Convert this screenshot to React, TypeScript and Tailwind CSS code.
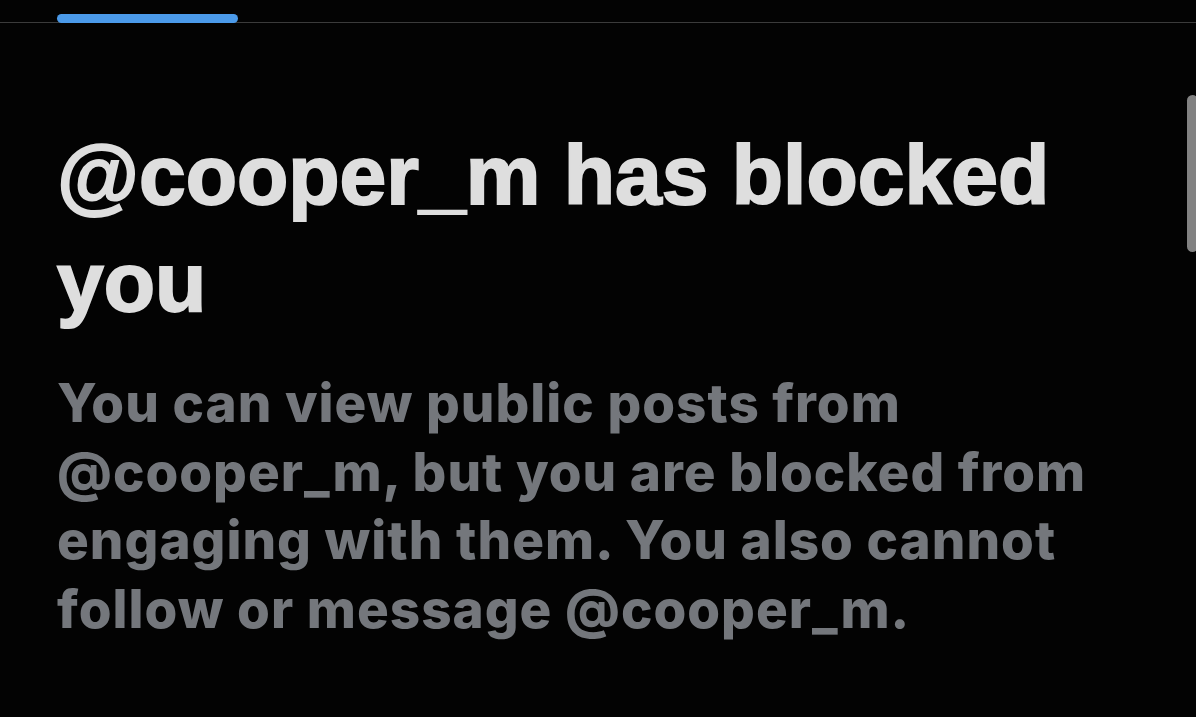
import React from "react";

// Blocked-profile notice, dark theme
function TabStrip() {
  return (
    <div className="relative h-[23px] border-b border-[#3b3b3b]">
      <div className="absolute left-[57px] bottom-[-1px] h-[9px] w-[181px] rounded-full bg-[#4b9ae9]" />
    </div>
  );
}

function Scrollbar() {
  return (
    <div className="absolute right-[-2px] top-[95px] h-[157px] w-[11px] rounded-full bg-[#828282]" />
  );
}

export default function App() {
  return (
    <div className="relative h-[717px] w-[1196px] overflow-hidden bg-[#030303]">
      <TabStrip />
      <Scrollbar />
      <div className="pl-[57px] pt-[99px]">
        <h1 className="max-w-[1075px] font-['Liberation_Sans',Arial,sans-serif] text-[84px] font-bold leading-[107px] text-[#dedede] [-webkit-text-stroke:2px_#dedede]">
          @cooper_m has blocked you
        </h1>
        <p className="mt-[33px] font-['Inter',sans-serif] text-[53px] font-extrabold leading-[68.5px] tracking-[1px] text-[#74777c]">
          You can view public posts from
          <br />
          @cooper_m, but you are blocked from
          <br />
          engaging with them. You also cannot
          <br />
          follow or message @cooper_m.
        </p>
      </div>
    </div>
  );
}
